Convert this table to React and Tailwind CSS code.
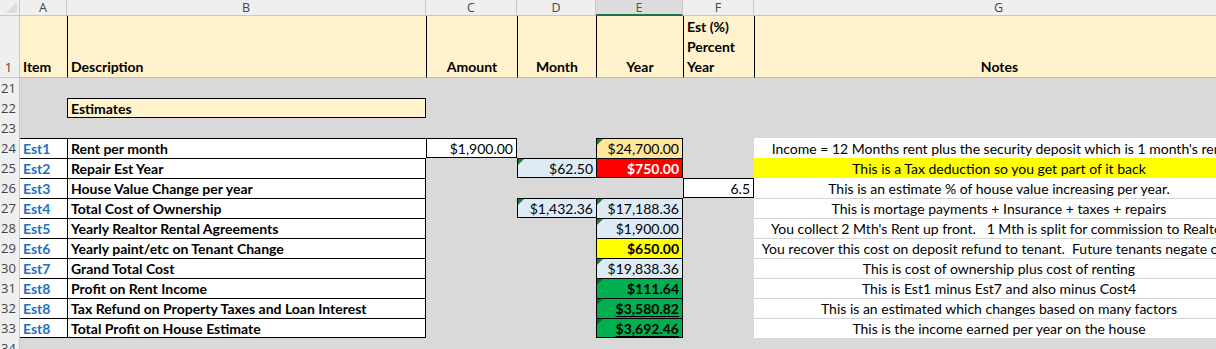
import clsx from "clsx";

const COLS = ["A", "B", "C", "D", "E", "F", "G"];

const EST = [
  {
    n: 24, id: "Est1", desc: "Rent per month",
    C: { v: "$1,900.00" },
    E: { v: "$24,700.00", bg: "bg-[#ffe699]", tri: true },
    note: "Income = 12 Months rent plus the security deposit which is 1 month's rent",
  },
  {
    n: 25, id: "Est2", desc: "Repair Est Year",
    D: { v: "$62.50", bg: "bg-[#ddebf7]", tri: true },
    E: { v: "$750.00", bg: "bg-[#ff0000]", bold: true, white: true },
    note: "This is a Tax deduction so you get part of it back",
    yellow: true,
  },
  {
    n: 26, id: "Est3", desc: "House Value Change per year",
    F: { v: "6.5" },
    note: "This is an estimate % of house value increasing per year.",
  },
  {
    n: 27, id: "Est4", desc: "Total Cost of Ownership",
    D: { v: "$1,432.36", bg: "bg-[#ddebf7]", tri: true },
    E: { v: "$17,188.36", bg: "bg-[#ddebf7]", tri: true },
    note: "This is mortage payments + Insurance + taxes + repairs",
  },
  {
    n: 28, id: "Est5", desc: "Yearly Realtor Rental Agreements",
    E: { v: "$1,900.00", bg: "bg-[#ddebf7]", tri: true },
    note: "You collect 2 Mth's Rent up front.   1 Mth is split for commission to Realtor",
  },
  {
    n: 29, id: "Est6", desc: "Yearly paint/etc on Tenant Change",
    E: { v: "$650.00", bg: "bg-[#ffff00]", bold: true },
    note: "You recover this cost on deposit refund to tenant.  Future tenants negate cost",
  },
  {
    n: 30, id: "Est7", desc: "Grand Total Cost",
    E: { v: "$19,838.36", bg: "bg-[#ddebf7]", tri: true },
    note: "This is cost of ownership plus cost of renting",
  },
  {
    n: 31, id: "Est8", desc: "Profit on Rent Income",
    E: { v: "$111.64", bg: "bg-[#00b050]", bold: true, tri: true, dark: true },
    note: "This is Est1 minus Est7 and also minus Cost4",
  },
  {
    n: 32, id: "Est8", desc: "Tax Refund on Property Taxes and Loan Interest",
    E: { v: "$3,580.82", bg: "bg-[#00b050]", bold: true, tri: true, dark: true, ul: true },
    note: "This is an estimated which changes based on many factors",
  },
  {
    n: 33, id: "Est8", desc: "Total Profit on House Estimate",
    E: { v: "$3,692.46", bg: "bg-[#00b050]", bold: true, tri: true, dark: true, ul: true },
    note: "This is the income earned per year on the house",
  },
];

// which cells carry black borders (rows 24..33)
const boxed = (r, col) => {
  if (!r) return false;
  if (col === "A" || col === "B") return true;
  return !!r[col];
};

const RowHead = ({ n }) => (
  <div className="flex items-center justify-start border-r border-[#c8c8c8] bg-[#efefef] pl-[1px] text-[13px] leading-[16px] text-[#444] [font-family:'Open_Sans',sans-serif]">
    <span className="w-[15px] text-center">{n}</span>
  </div>
);

const Tri = ({ dark }) => (
  <span
    className={clsx(
      "absolute left-0 top-0 h-0 w-0 border-t-[6px] border-r-[6px] border-r-transparent",
      dark ? "border-t-[#0a6a2a]" : "border-t-[#1b7d3a]"
    )}
  />
);

function DataRow({ r, idx }) {
  const below = EST[idx + 1];
  const cell = (col, extra, children) => {
    const on = boxed(r, col);
    const right = COLS[COLS.indexOf(col) + 1];
    return (
      <div
        key={col}
        className={clsx(
          "relative flex items-center whitespace-nowrap border-black",
          on && "border-t",
          on && col !== "A" && "border-l",
          on && right && !boxed(r, right) && "border-r",
          on && !boxed(below, col) && "border-b",
          extra
        )}
      >
        {children}
      </div>
    );
  };

  const num = (col) => {
    const c = r[col];
    if (!c) return cell(col, "bg-[#d9d9d9]");
    return cell(
      col,
      clsx("justify-end pr-[3px]", c.bg || "bg-white", c.bold && "font-bold", c.white ? "text-white" : "text-black"),
      <>
        {c.tri && <Tri dark={c.dark} />}
        <span className={clsx(c.ul && "underline decoration-1 underline-offset-2")}>{c.v}</span>
      </>
    );
  };

  return (
    <>
      <RowHead n={r.n} />
      {cell("A", "bg-white pl-[3px] font-bold text-[#1f6fc4]", r.id)}
      {cell("B", "bg-white pl-[3px] font-bold", r.desc)}
      {num("C")}
      {num("D")}
      {num("E")}
      {num("F")}
      <div
        className={clsx(
          "flex items-center justify-center whitespace-pre",
          r.yellow ? "bg-[#ffff00]" : "bg-white",
          r.n >= 27 && "border-t border-[#d4d4d4]"
        )}
      >
        {r.note}
      </div>
    </>
  );
}

const Gray = ({ n }) => (
  <>
    <RowHead n={n} />
    <div className="col-span-7 bg-[#d9d9d9]" />
  </>
);

const head = "border-b border-l border-b-[#bfbfbf] border-l-black bg-[#fff2cc] font-bold leading-[20px]";

export default function App() {
  return (
    <div className="h-[349px] w-[1216px] overflow-hidden bg-[#d9d9d9] text-[14px] text-black [font-family:Lato,sans-serif]">
      <div className="grid w-max grid-cols-[20px_47px_359px_91px_79px_87px_71px_490px] grid-rows-[16px_62px_repeat(14,20px)]">
        {/* column letters */}
        <div className="relative border-b border-r border-[#c8c8c8] bg-[#efefef]">
          <svg className="absolute bottom-[2px] right-[2px]" width="11" height="11" viewBox="0 0 11 11">
            <polygon points="11,0 11,11 0,11" fill="#dcdcdc" />
          </svg>
        </div>
        {COLS.map((c) => (
          <div
            key={c}
            className={clsx(
              "flex items-center justify-center border-r text-[12.5px] leading-[15px] [font-family:'Open_Sans',sans-serif]",
              c === "E"
                ? "border-b-2 border-r-[#c8c8c8] border-b-[#217346] bg-[#dcdcdc] text-[#217346]"
                : "border-b border-[#c8c8c8] bg-[#efefef] text-[#444]"
            )}
          >
            {c}
          </div>
        ))}

        {/* row 1 headings */}
        <div className="flex items-end border-b border-r border-[#c8c8c8] bg-[#efefef] pb-[1px] pl-[1px] text-[13px] leading-[18px] text-[#444] [font-family:'Open_Sans',sans-serif]">
          <span className="w-[15px] text-center">1</span>
        </div>
        <div className="flex items-end border-b border-[#bfbfbf] bg-[#fff2cc] pl-[3px] font-bold leading-[20px]">Item</div>
        <div className={clsx("flex items-end pl-[3px]", head)}>Description</div>
        <div className={clsx("flex items-end justify-center", head)}>Amount</div>
        <div className={clsx("flex items-end justify-center", head)}>Month</div>
        <div className={clsx("flex items-end justify-center", head)}>Year</div>
        <div className={clsx("flex flex-col justify-end pl-[3px]", head)}>
          <span>Est (%)</span>
          <span>Percent</span>
          <span>Year</span>
        </div>
        <div className={clsx("flex items-end justify-center", head)}>Notes</div>

        <Gray n={21} />

        <RowHead n={22} />
        <div className="bg-[#d9d9d9]" />
        <div className="flex items-center border border-black bg-[#fff2cc] pl-[3px] font-bold">Estimates</div>
        <div className="col-span-5 bg-[#d9d9d9]" />

        <Gray n={23} />

        {EST.map((r, i) => (
          <DataRow key={r.n} r={r} idx={i} />
        ))}

        <Gray n={34} />
      </div>
    </div>
  );
}
